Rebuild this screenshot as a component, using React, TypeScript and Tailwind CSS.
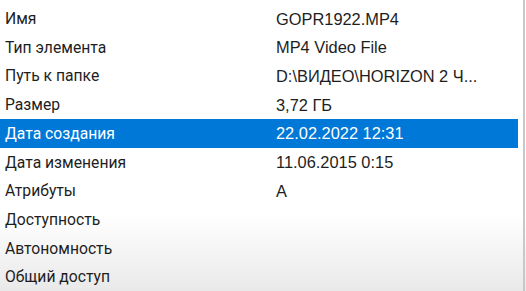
import React from "react";

const rows: { label: string; value: string; selected?: boolean }[] = [
  { label: "Имя", value: "GOPR1922.MP4" },
  { label: "Тип элемента", value: "MP4 Video File" },
  { label: "Путь к папке", value: "D:\\ВИДЕО\\HORIZON 2 Ч..." },
  { label: "Размер", value: "3,72 ГБ" },
  { label: "Дата создания", value: "22.02.2022 12:31", selected: true },
  { label: "Дата изменения", value: "11.06.2015 0:15" },
  { label: "Атрибуты", value: "A" },
  { label: "Доступность", value: "" },
  { label: "Автономность", value: "" },
  { label: "Общий доступ", value: "" },
];

export default function App() {
  return (
    <div className="w-[526px] h-[291px] overflow-hidden flex bg-[linear-gradient(to_bottom,#ffffff_0px,#ffffff_215px,#e9e9e9_291px)]">
      <div className="flex-1 flex flex-col pt-[4px] pr-[5px]">
        {rows.map((r) => (
          <div
            key={r.label}
            className={`h-[28.8px] flex items-center pt-[1px] ${
              r.selected ? "bg-[#0078d7] text-white" : "text-[#1e1e1e]"
            }`}
          >
            <span className="w-[276px] pl-[5px] text-[15.7px] font-['Roboto',sans-serif] whitespace-nowrap">
              {r.label}
            </span>
            <span className="font-['Liberation_Sans',Arial,sans-serif] text-[16.4px] whitespace-nowrap">
              {r.value}
            </span>
          </div>
        ))}
      </div>
      <div className="w-[2px] bg-[#c8c8c8] mr-[1px]" />
    </div>
  );
}
